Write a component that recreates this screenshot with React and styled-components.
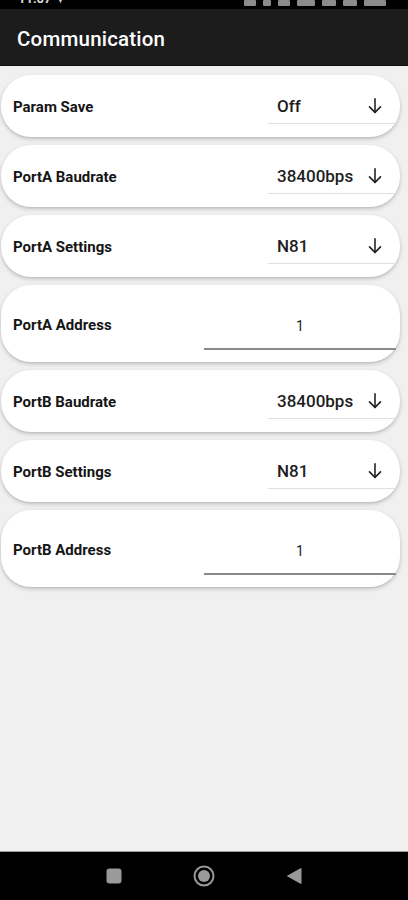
import styled, { createGlobalStyle } from "styled-components";

const GlobalStyle = createGlobalStyle`
  html, body {
    margin: 0;
    padding: 0;
    background: #f0f0f0;
  }
  body {
    font-family: Roboto, "Noto Sans", "Liberation Sans", sans-serif;
    -webkit-font-smoothing: antialiased;
  }
`;

const Screen = styled.div`
  display: flex;
  flex-direction: column;
  width: 408px;
  height: 900px;
  background: #f0f0f0;
  overflow: hidden;
`;

const StatusBar = styled.div`
  height: 9px;
  background: #000;
  overflow: hidden;
  display: flex;
  align-items: flex-end;
  justify-content: space-between;
  padding: 0 22px 0 18px;
`;

const StatusText = styled.span`
  color: #ddd;
  font-size: 13px;
  font-weight: 700;
  line-height: 13px;
  margin-bottom: 4px;
`;

const StatusIcons = styled.div`
  display: flex;
  gap: 7px;
  align-items: flex-end;
  margin-bottom: 3px;
`;

const StatusGlyph = styled.span`
  display: block;
  width: ${(p) => p.w}px;
  height: 6px;
  border-radius: 1px;
  background: #8c8c8c;
`;

const AppBar = styled.header`
  height: 57px;
  box-sizing: border-box;
  background: #1c1c1c;
  display: flex;
  align-items: center;
  padding: 3px 17px 0;
  border-bottom: 1px solid #0c0c0c;
`;

const Title = styled.h1`
  margin: 0;
  color: #fff;
  font-size: 20.5px;
  font-weight: 500;
  letter-spacing: 0.2px;
`;

const List = styled.main`
  flex: 1;
  display: flex;
  flex-direction: column;
  gap: 8px;
  padding: 9px 8px 0 1px;
`;

const Card = styled.section`
  display: flex;
  align-items: center;
  justify-content: space-between;
  background: #fff;
  border-radius: 30px;
  box-shadow: 0 2px 4px rgba(0, 0, 0, 0.18), 0 1px 2px rgba(0, 0, 0, 0.08);
  padding: ${(p) => (p.tall ? "14px 4px 12px 12px" : "14px 4px 13px 12px")};
`;

const Label = styled.span`
  color: #151515;
  font-size: 15px;
  font-weight: 700;
`;

const Select = styled.div`
  width: 128px;
  height: 35px;
  box-sizing: border-box;
  display: flex;
  align-items: center;
  justify-content: space-between;
  padding: 0 10px 0 9px;
  border-bottom: 1px solid #e0e0e0;
`;

const Value = styled.span`
  color: #1e1e1e;
  font-size: 17px;
  font-weight: 500;
`;

const Field = styled.div`
  width: 192px;
  height: 51px;
  box-sizing: border-box;
  display: flex;
  align-items: center;
  justify-content: center;
  padding-top: 4px;
  border-bottom: 2px solid #8a8a8a;
  color: #1e1e1e;
  font-size: 14px;
`;

const NavBar = styled.nav`
  height: 48px;
  background: #000;
  border-top: 1px solid #9a9a9a;
  display: flex;
  align-items: center;
  justify-content: center;
  gap: 66px;
`;

const NavSlot = styled.div`
  width: 24px;
  height: 24px;
  display: flex;
  align-items: center;
  justify-content: center;
`;

const ArrowDown = () => (
  <svg width="22" height="22" viewBox="0 0 24 24" fill="none" stroke="#1e1e1e" strokeWidth="1.7" strokeLinecap="round" strokeLinejoin="round">
    <path d="M12 4v15" />
    <path d="M18 13l-6 6-6-6" />
  </svg>
);

const rows = [
  { label: "Param Save", value: "Off" },
  { label: "PortA Baudrate", value: "38400bps" },
  { label: "PortA Settings", value: "N81" },
  { label: "PortA Address", input: "1" },
  { label: "PortB Baudrate", value: "38400bps" },
  { label: "PortB Settings", value: "N81" },
  { label: "PortB Address", input: "1" },
];

export default function App() {
  return (
    <>
      <GlobalStyle />
      <Screen>
        <StatusBar>
          <StatusText>11:07 ✦</StatusText>
          <StatusIcons>
            <StatusGlyph w={12} />
            <StatusGlyph w={8} />
            <StatusGlyph w={12} />
            <StatusGlyph w={18} />
            <StatusGlyph w={14} />
            <StatusGlyph w={14} />
            <StatusGlyph w={22} />
          </StatusIcons>
        </StatusBar>
        <AppBar>
          <Title>Communication</Title>
        </AppBar>
        <List>
          {rows.map((r) => (
            <Card key={r.label} tall={r.input !== undefined}>
              <Label>{r.label}</Label>
              {r.input !== undefined ? (
                <Field>{r.input}</Field>
              ) : (
                <Select>
                  <Value>{r.value}</Value>
                  <ArrowDown />
                </Select>
              )}
            </Card>
          ))}
        </List>
        <NavBar>
          <NavSlot>
            <svg width="16" height="16" viewBox="0 0 16 16">
              <rect x="0.5" y="0.5" width="15" height="15" rx="3" fill="#9a9a9a" />
            </svg>
          </NavSlot>
          <NavSlot>
            <svg width="24" height="24" viewBox="0 0 24 24">
              <circle cx="12" cy="12" r="9.5" fill="none" stroke="#9a9a9a" strokeWidth="2" />
              <circle cx="12" cy="12" r="6" fill="#9a9a9a" />
            </svg>
          </NavSlot>
          <NavSlot>
            <svg width="16" height="18" viewBox="0 0 16 18">
              <path d="M15 1.5v15L1.5 9z" fill="#9a9a9a" stroke="#9a9a9a" strokeWidth="1" strokeLinejoin="round" />
            </svg>
          </NavSlot>
        </NavBar>
      </Screen>
    </>
  );
}
